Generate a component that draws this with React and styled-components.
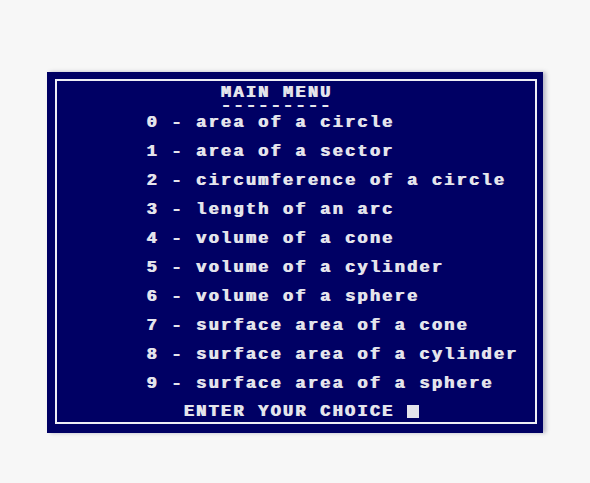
import React from "react";
import styled, { createGlobalStyle } from "styled-components";

// one text cell of the 40 column screen
const CELL = 12.4;
const FONT = 17;

const GlobalStyle = createGlobalStyle`
  html, body {
    margin: 0;
    padding: 0;
    background: #f7f7f7;
  }
`;

const Page = styled.div`
  width: 590px;
  height: 483px;
  padding-top: 72px;
  padding-left: 47px;
  box-sizing: border-box;
`;

const Screen = styled.div`
  width: 496px;
  height: 361px;
  background: #000064;
  box-sizing: border-box;
  padding: 7px 6px 9px 8px;
  box-shadow: 3px 0 4px rgba(0, 0, 60, 0.25);
`;

const Frame = styled.div`
  height: 100%;
  box-sizing: border-box;
  border: 2px solid #eeeef6;
  padding-top: 6px;
  font-family: "Liberation Mono", "DejaVu Sans Mono", monospace;
  font-weight: bold;
  font-size: ${FONT}px;
  letter-spacing: ${CELL - FONT * 0.6}px;
  color: #e4e4ec;
  text-shadow: 1px 0 0 #e4e4ec;
  white-space: pre;
`;

const Line = styled.div`
  height: 29px;
  line-height: 29px;
  padding-left: ${(p) => p.$col * CELL - 10}px;
`;

// title and its underline share one block, two tight lines
const Title = styled(Line)`
  height: 25px;
  line-height: 12.5px;
  margin-bottom: -4px;
`;

const Prompt = styled(Line)`
  margin-top: -1px;
`;

const Cursor = styled.span`
  display: inline-block;
  width: 12px;
  height: 13px;
  background: #e4e4ec;
  vertical-align: -2px;
`;

const items = [
  "area of a circle",
  "area of a sector",
  "circumference of a circle",
  "length of an arc",
  "volume of a cone",
  "volume of a cylinder",
  "volume of a sphere",
  "surface area of a cone",
  "surface area of a cylinder",
  "surface area of a sphere",
];

export default function App() {
  return (
    <Page>
      <GlobalStyle />
      <Screen>
        <Frame>
          <Title $col={14}>{"MAIN MENU\n---------"}</Title>
          {items.map((label, i) => (
            <Line key={i} $col={8}>
              {i} - {label}
            </Line>
          ))}
          <Prompt $col={11}>
            ENTER YOUR CHOICE <Cursor />
          </Prompt>
        </Frame>
      </Screen>
    </Page>
  );
}
